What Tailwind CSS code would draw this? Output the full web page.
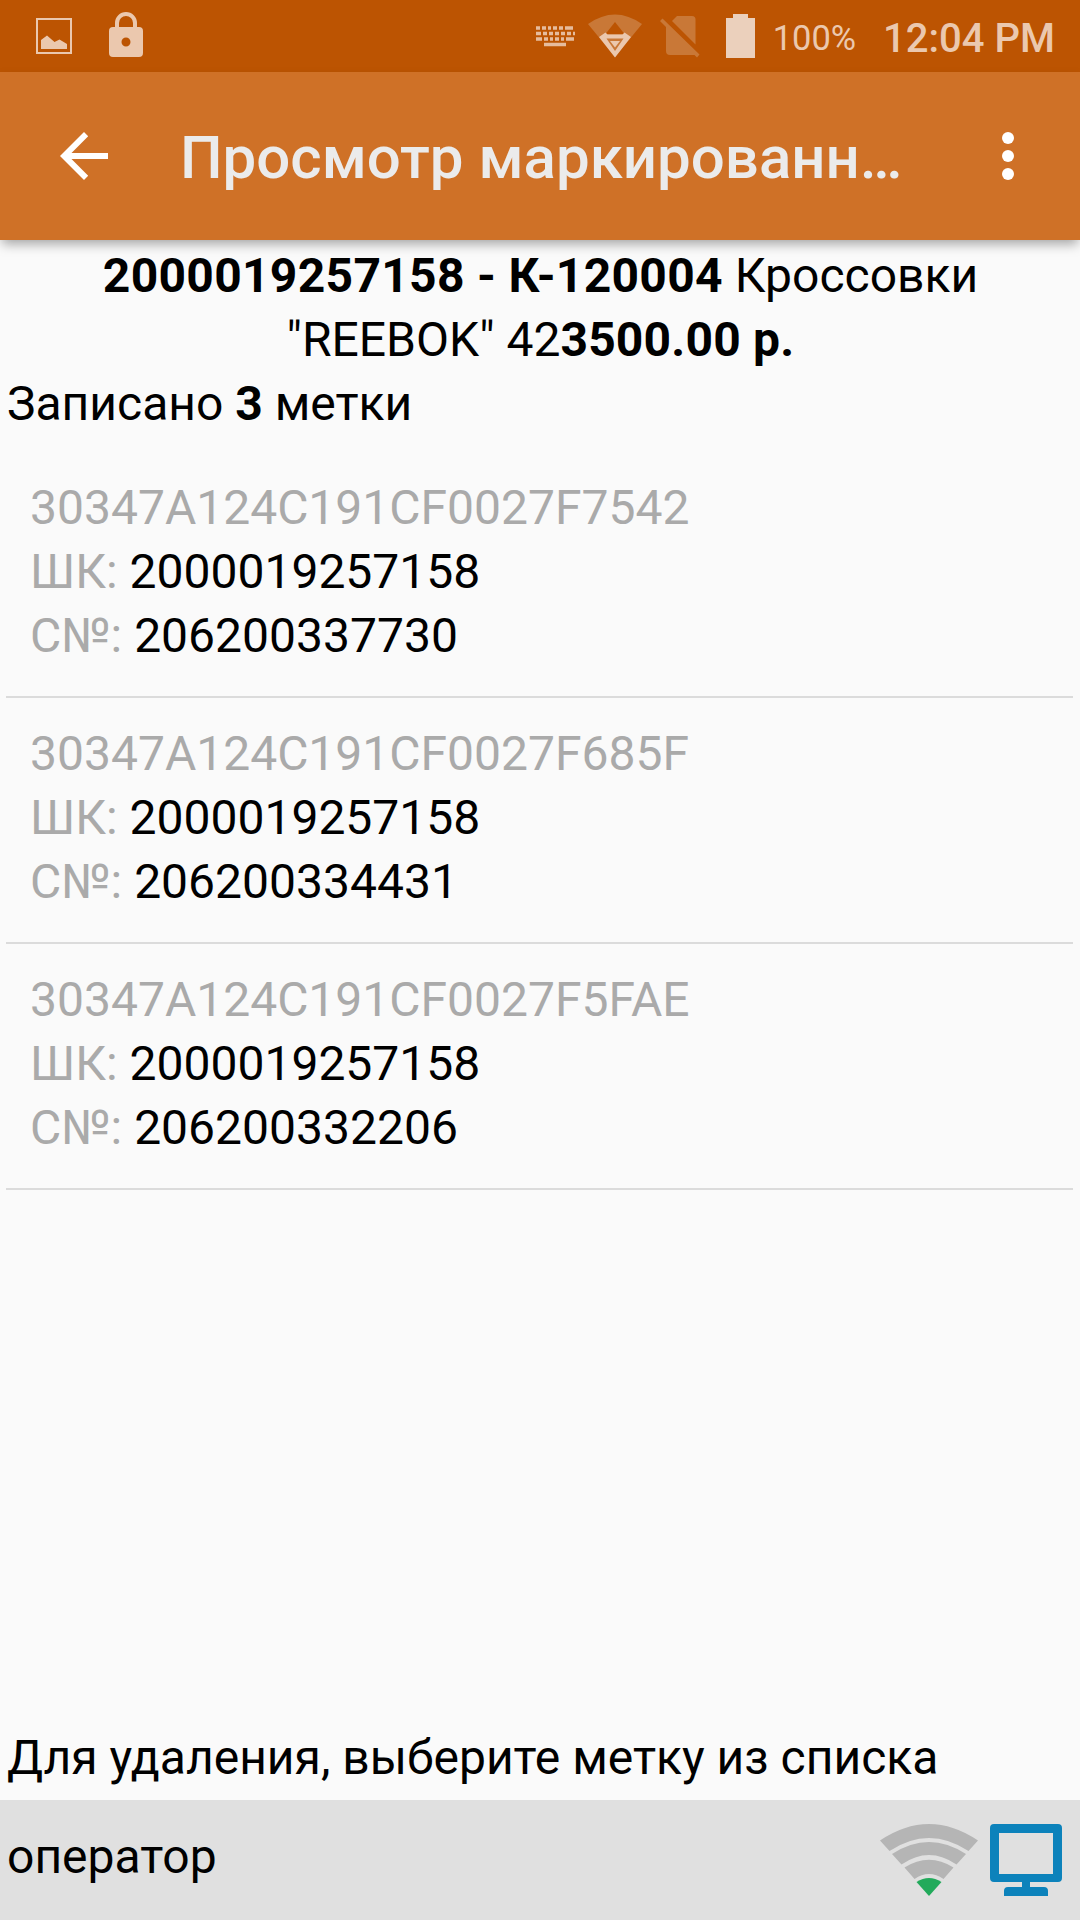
<!DOCTYPE html>
<html lang="ru">
<head>
    <meta charset="UTF-8">
    <meta name="viewport" content="width=device-width, initial-scale=1.0">
    <title>Просмотр маркированных товаров</title>
    <script src="https://cdn.jsdelivr.net/npm/@tailwindcss/browser@4"></script>
</head>
<body class="bg-[#fafafa] font-['Roboto',sans-serif] text-black">
    <div class="flex flex-col w-[1080px] h-[1920px] overflow-hidden">
        <!-- Status bar -->
        <div class="flex items-center h-[72px] shrink-0 bg-[#bc5402] text-[#ebc8ae]">
            <svg class="w-9 h-9 ml-9" viewBox="0 0 36 36" fill="currentColor">
                <path d="M1 1h34v34H1z" fill="none" stroke="currentColor" stroke-width="2"/>
                <path d="M5 22l6-4.500 7.500 6.500 5-2.500 7.500 4.500v5H5z"/>
            </svg>
            <svg class="w-[34px] h-[46px] ml-[37px] -mt-0.5" viewBox="0 0 34 46">
                <path d="M8 17V11a9 9 0 0 1 18 0v6" fill="none" stroke="currentColor" stroke-width="4"/>
                <path fill="currentColor" fill-rule="evenodd" d="M4 15h26a4 4 0 0 1 4 4v22a4 4 0 0 1-4 4H4a4 4 0 0 1-4-4V19a4 4 0 0 1 4-4zm13 10.500a4.500 4.500 0 1 0 0 9 4.500 4.500 0 0 0 0-9z"/>
            </svg>
            <div class="flex items-center ml-auto mr-[25px]">
                <svg class="w-[40px] h-[22px]" viewBox="0 0 40 22" fill="none" stroke="currentColor" stroke-width="3.500" opacity="0.9">
                    <path d="M1 3h4m2 0h4m2 0h3m2 0h4m2 0h4m2 0h8"/>
                    <path d="M1 8.500h5m2 0h4m2 0h4m2 0h4m2 0h4m2 0h4m2 0h4"/>
                    <path d="M1 14h6m2 0h4m2 0h3m2 0h4m2 0h3m2 0h8"/>
                    <path d="M9 19.500h22"/>
                </svg>
                <svg class="w-[54px] h-[44px] ml-[13px]" viewBox="0 0 54 44">
                    <path d="M0 10Q27 -9 54 10L27 43z" fill="#c97837"/>
                    <path d="M27 8L36.500 20H17.500z" fill="#bc5402"/>
                    <path fill="currentColor" fill-rule="evenodd" d="M11 23l6.500-4.500 2 2h15l2-2 6.500 4.500-16 20.500zm7.500 1.500l8.500 12.500 8.500-12.500z"/>
                    <path fill="currentColor" d="M22 27h10l-5 6.500z"/>
                </svg>
                <svg class="w-[40px] h-[44px] ml-[18px]" viewBox="0 0 40 44" fill="#c97837">
                    <path d="M12 7l5-5h15q3.500 0 3.500 3.500v25z"/>
                    <path d="M0 7l2.500-2.500 37 36-2.500 3L34.500 41H10q-4 0-4-4V13z"/>
                </svg>
                <svg class="w-[29px] h-[44px] ml-[26px]" viewBox="0 0 29 44" fill="#ebd0bc">
                    <path d="M7 0h15v4h7v40H0V4h7z"/>
                </svg>
                <span class="mt-[3px] ml-[18px] text-[34.5px]/[72px]">100%</span>
                <span class="mt-[5px] ml-[27px] text-[40px]/[72px] font-medium">12:04 PM</span>
            </div>
        </div>

        <!-- App bar -->
        <div class="flex items-center h-[168px] shrink-0 bg-[#cf7127] text-white shadow-[0_6px_11px_-2px_rgba(0,0,0,0.35)]">
            <svg class="w-12 h-12 ml-[60px]" viewBox="0 0 48 48" fill="currentColor">
                <path d="M48 21H11.500L28.200 4.200 24 0 0 24l24 24 4.200-4.200L11.500 27H48z"/>
            </svg>
            <h1 class="ml-[72px] mt-1 text-[60px]/[72px] font-medium text-[#ebebeb] whitespace-nowrap">Просмотр маркированн…</h1>
            <svg class="w-3 h-12 ml-auto mr-[66px]" viewBox="0 0 12 48" fill="currentColor">
                <circle cx="6" cy="6" r="6"/>
                <circle cx="6" cy="24" r="6"/>
                <circle cx="6" cy="42" r="6"/>
            </svg>
        </div>

        <!-- Content -->
        <div class="flex flex-col grow pl-1.5 pr-[7px] pt-1 text-[48px]/[64px]">
            <p class="pl-[2px] text-center"><b class="tracking-[0.3px]">2000019257158 - К-120004</b> Кроссовки<br>"REEBOK" 42<b class="tracking-[0.2px]">3500.00 р.</b></p>
            <p class="pl-px">Записано <b>3</b> метки</p>
            <ul class="mt-[16px]">
                <li class="h-[246px] pt-6 px-6 border-b-2 border-[#dbdbdb] text-[#aaaaaa]">
                    <p>30347A124C191CF0027F7542</p>
                    <p>ШК: <span class="text-black">2000019257158</span></p>
                    <p>С№: <span class="text-black">206200337730</span></p>
                </li>
                <li class="h-[246px] pt-6 px-6 border-b-2 border-[#dbdbdb] text-[#aaaaaa]">
                    <p>30347A124C191CF0027F685F</p>
                    <p>ШК: <span class="text-black">2000019257158</span></p>
                    <p>С№: <span class="text-black">206200334431</span></p>
                </li>
                <li class="h-[246px] pt-6 px-6 border-b-2 border-[#dbdbdb] text-[#aaaaaa]">
                    <p>30347A124C191CF0027F5FAE</p>
                    <p>ШК: <span class="text-black">2000019257158</span></p>
                    <p>С№: <span class="text-black">206200332206</span></p>
                </li>
            </ul>
            <p class="pl-px mt-auto mb-[10px]">Для удаления, выберите метку из списка</p>
        </div>

        <!-- Footer -->
        <div class="flex items-center h-[120px] shrink-0 bg-[#e0e0e0] pl-[7px] pr-[18px]">
            <span class="text-[48px]/[64px] -mt-1.5">оператор</span>
            <svg class="w-[98px] h-[72px] ml-auto" viewBox="0 0 98 72">
                <path fill="#b5b5b5" d="M0 16.500Q49 -16.500 98 16.500L88.500 27Q49 1 9.500 27zM12 30Q49 6 86 30L76.500 40.500Q49 21.500 21.500 40.500zM24.500 43.500Q49 28 73.500 43.500L63.500 55Q49 45 34.500 55z"/>
                <path fill="#22aa5b" d="M36.500 58Q49 50 61.500 58L49 72z"/>
            </svg>
            <svg class="w-[72px] h-[72px] ml-[12px]" viewBox="0 0 72 72" fill="#0c82bb">
                <path fill-rule="evenodd" d="M4 0h64a4 4 0 0 1 4 4v50a4 4 0 0 1-4 4H4a4 4 0 0 1-4-4V4a4 4 0 0 1 4-4zm5 9v41h54V9z"/>
                <path d="M32 58h8v5h14q4 0 4 4v5H14v-5q0-4 4-4h14z"/>
            </svg>
        </div>
    </div>
</body>
</html>
